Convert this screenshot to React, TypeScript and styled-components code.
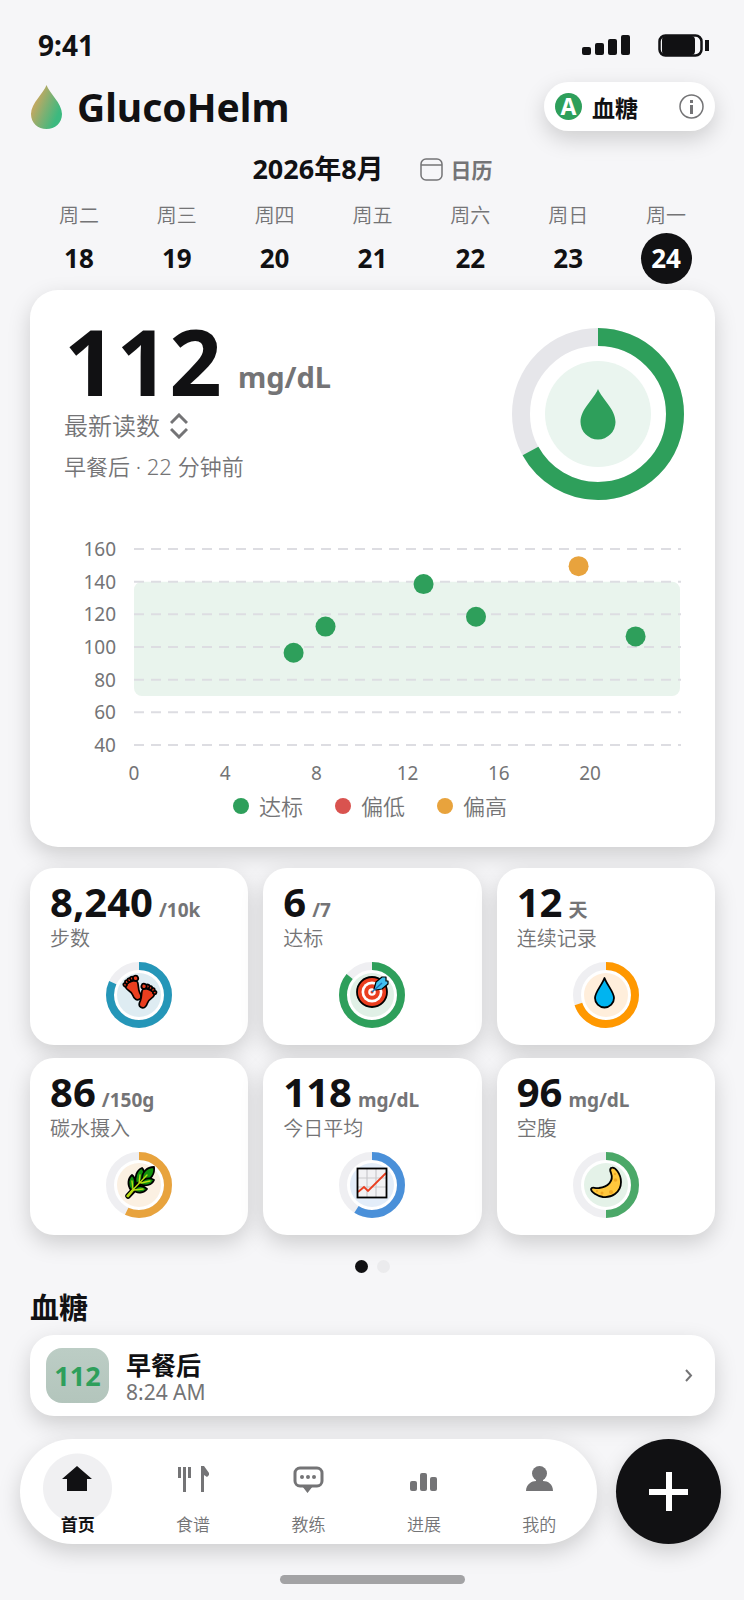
import React from "react";
import styled, { createGlobalStyle, ThemeProvider } from "styled-components";

const theme = {
  colors: {
    page: "#f6f6f8",
    card: "#ffffff",
    ink: "#111113",
    muted: "#747476",
    green: "#2e9f5b",
    red: "#d9534f",
    amber: "#e8a33d",
    grid: "#dddde2",
    band: "#e9f4ed",
  },
  shadow: "0 8px 22px rgba(0, 0, 0, 0.17)",
};

const GlobalStyle = createGlobalStyle`
  * {
    box-sizing: border-box;
  }

  body {
    margin: 0;
    background: ${theme.colors.page};
    color: ${theme.colors.ink};
    font-family: "Noto Sans", "Noto Sans CJK SC", sans-serif;
  }

  button {
    border: 0;
    padding: 0;
    background: none;
    color: inherit;
    font: inherit;
    text-align: left;
    cursor: pointer;
  }

  h1, h2, p, ul {
    margin: 0;
    padding: 0;
  }

  svg {
    display: block;
    flex: none;
  }
`;

const Page = styled.div`
  padding-top: 28px;
`;

const Content = styled.main`
  padding: 0 29px 0 30px;
`;

const StatusBar = styled.div`
  display: flex;
  align-items: center;
  justify-content: space-between;
  padding: 0 5px 0 8px;
  line-height: 34px;
  font-size: 28px;
  font-weight: 700;
`;

const StatusIcons = styled.div`
  display: flex;
  align-items: center;
  gap: 28px;
`;

const Header = styled.header`
  display: flex;
  align-items: center;
  justify-content: space-between;
  margin-top: 20px;
`;

const Brand = styled.div`
  display: flex;
  align-items: center;
  gap: 14px;
`;

const BrandName = styled.h1`
  font-size: 39px;
  line-height: 49px;
  font-weight: 700;
`;

const ModePill = styled.button`
  display: flex;
  align-items: center;
  width: 171px;
  height: 49px;
  padding: 0 11px;
  border-radius: 25px;
  background: ${({ theme }) => theme.colors.card};
  box-shadow: ${({ theme }) => theme.shadow};
  font-size: 23px;
  font-weight: 700;

  svg {
    margin-left: auto;
  }
`;

const ModeLetter = styled.span`
  width: 27px;
  margin-right: 10px;
  border-radius: 50%;
  background: ${({ theme }) => theme.colors.green};
  color: #fff;
  font-size: 23px;
  line-height: 27px;
  text-align: center;
`;

const MonthRow = styled.div`
  display: flex;
  align-items: center;
  justify-content: center;
  gap: 36px;
  margin-top: 20px;
`;

const Month = styled.h2`
  font-size: 27px;
  line-height: 36px;
  font-weight: 700;
`;

const CalendarButton = styled.button`
  display: flex;
  align-items: center;
  gap: 8px;
  color: ${({ theme }) => theme.colors.muted};
  font-size: 21px;
  font-weight: 700;
`;

const Week = styled.div`
  display: grid;
  grid-template-columns: repeat(7, 1fr);
  margin-top: 14px;
`;

const Day = styled.button`
  display: flex;
  flex-direction: column;
  align-items: center;
  gap: 2px;
`;

const DayName = styled.span`
  color: ${({ theme }) => theme.colors.muted};
  font-size: 20px;
  line-height: 30px;
  font-weight: 350;
`;

const DayNumber = styled.span<{ $selected?: boolean }>`
  width: 51px;
  border-radius: 50%;
  background: ${({ theme, $selected }) =>
    $selected ? theme.colors.ink : "transparent"};
  color: ${({ $selected }) => ($selected ? "#fff" : "inherit")};
  font-size: 26px;
  line-height: 51px;
  font-weight: 700;
  text-align: center;
`;

const Card = styled.section`
  border-radius: 28px;
  background: ${({ theme }) => theme.colors.card};
  box-shadow: ${({ theme }) => theme.shadow};
`;

const ReadingCard = styled(Card)`
  margin-top: 6px;
  padding: 25px 31px 25px 34px;
`;

const ReadingTop = styled.div`
  display: flex;
  justify-content: space-between;
  align-items: flex-end;
`;

const Reading = styled.p`
  display: flex;
  align-items: flex-end;
  gap: 16px;
  font-size: 92px;
  line-height: 92px;
  font-weight: 700;
`;

const ReadingUnit = styled.span`
  margin-bottom: 10px;
  color: ${({ theme }) => theme.colors.muted};
  font-size: 29px;
  line-height: 40px;
`;

const ReadingPicker = styled.button`
  display: flex;
  align-items: center;
  gap: 10px;
  margin-top: 1px;
  color: ${({ theme }) => theme.colors.muted};
  font-size: 24px;
  line-height: 36px;
  font-weight: 350;
`;

const ReadingMeta = styled.p`
  margin: 6px 0 18px;
  color: ${({ theme }) => theme.colors.muted};
  font-size: 22px;
  line-height: 32px;
  font-weight: 350;
`;

const Chart = styled.svg`
  width: 100%;
  margin-top: 35px;

  text {
    fill: ${({ theme }) => theme.colors.muted};
    font-size: 19px;
  }
`;

const Legend = styled.ul`
  display: flex;
  justify-content: center;
  gap: 32px;
  padding-right: 8px;
  list-style: none;
`;

const LegendItem = styled.li<{ $color: string }>`
  display: flex;
  align-items: center;
  gap: 10px;
  color: ${({ theme }) => theme.colors.muted};
  font-size: 22px;
  line-height: 32px;
  font-weight: 350;

  &::before {
    content: "";
    width: 16px;
    height: 16px;
    border-radius: 50%;
    background: ${({ $color }) => $color};
  }
`;

const Metrics = styled.div`
  display: grid;
  grid-template-columns: repeat(3, 1fr);
  gap: 13px 15px;
  margin-top: 21px;
`;

const MetricCard = styled(Card)`
  padding: 13px 20px 17px;
  border-radius: 24px;

  svg {
    margin: 7px auto 0;
  }
`;

const MetricValue = styled.p`
  display: flex;
  align-items: baseline;
  gap: 6px;
  font-size: 40px;
  line-height: 42px;
  font-weight: 700;
`;

const MetricUnit = styled.span`
  color: ${({ theme }) => theme.colors.muted};
  font-size: 19px;
  line-height: 24px;
`;

const MetricLabel = styled.p`
  color: ${({ theme }) => theme.colors.muted};
  font-size: 20px;
  line-height: 32px;
  font-weight: 350;
`;

const Pager = styled.div`
  display: flex;
  justify-content: center;
  gap: 9px;
  margin-top: 25px;
`;

const PagerDot = styled.button<{ $active?: boolean }>`
  width: 13px;
  height: 13px;
  border-radius: 50%;
  background: ${({ theme, $active }) =>
    $active ? theme.colors.ink : "#ebebed"};
`;

const SectionTitle = styled.h2`
  margin: 16px 0 8px;
  font-size: 29px;
  line-height: 38px;
  font-weight: 700;
`;

const EntryRow = styled.button`
  display: flex;
  align-items: center;
  width: 100%;
  padding: 13px 22px 13px 16px;
  border-radius: 24px;
  background: ${({ theme }) => theme.colors.card};
  box-shadow: ${({ theme }) => theme.shadow};

  svg {
    margin-left: auto;
  }
`;

const EntryBadge = styled.span`
  width: 63px;
  margin-right: 17px;
  border-radius: 16px;
  background: linear-gradient(#bccdc5, #b3c5bc);
  color: ${({ theme }) => theme.colors.green};
  font-size: 27px;
  line-height: 55px;
  font-weight: 700;
  text-align: center;
`;

const EntryText = styled.span`
  display: flex;
  flex-direction: column;
`;

const EntryTitle = styled.span`
  font-size: 25px;
  line-height: 32px;
  font-weight: 700;
`;

const EntryTime = styled.span`
  color: ${({ theme }) => theme.colors.muted};
  font-size: 21px;
  line-height: 22px;
`;

const BottomBar = styled.div`
  display: flex;
  gap: 19px;
  margin-top: 23px;
  padding: 0 23px 0 20px;
`;

const Nav = styled.nav`
  display: grid;
  grid-template-columns: repeat(5, 1fr);
  flex: 1;
  height: 105px;
  border-radius: 53px;
  background: ${({ theme }) => theme.colors.card};
  box-shadow: ${({ theme }) => theme.shadow};
`;

const NavItem = styled.button<{ $active?: boolean }>`
  display: flex;
  flex-direction: column;
  align-items: center;
  padding-top: 25px;
  color: ${({ theme, $active }) =>
    $active ? theme.colors.ink : theme.colors.muted};
  font-size: 17px;
  line-height: 24px;
  font-weight: ${({ $active }) => ($active ? 700 : 350)};
  background: ${({ $active }) =>
    $active
      ? "radial-gradient(circle at 50% 49px, #f0f0f2 34px, transparent 35px)"
      : "none"};

  svg {
    margin-bottom: 18px;
  }
`;

const AddButton = styled.button`
  display: grid;
  place-items: center;
  width: 105px;
  height: 105px;
  border-radius: 50%;
  background: ${({ theme }) => theme.colors.ink};
  box-shadow: ${({ theme }) => theme.shadow};
  color: #fff;
`;

const HomeIndicator = styled.div`
  width: 185px;
  height: 9px;
  margin: 31px auto 15px;
  border-radius: 5px;
  background: #a3a3a5;
`;

const days = [
  { name: "周二", date: 18 },
  { name: "周三", date: 19 },
  { name: "周四", date: 20 },
  { name: "周五", date: 21 },
  { name: "周六", date: 22 },
  { name: "周日", date: 23 },
  { name: "周一", date: 24 },
];

const readings = [
  { hour: 7, value: 96.5, high: false },
  { hour: 8.4, value: 112.5, high: false },
  { hour: 12.7, value: 138.5, high: false },
  { hour: 15, value: 118.5, high: false },
  { hour: 19.5, value: 149.5, high: true },
  { hour: 22, value: 106.5, high: false },
];

interface IRingProps {
  size: number;
  stroke: number;
  percent: number;
  color: string;
  track: string;
  disc: string;
  discRadius: number;
  children: React.ReactNode;
}

// children are drawn around the ring's centre
const Ring = ({
  size,
  stroke,
  percent,
  color,
  track,
  disc,
  discRadius,
  children,
}: IRingProps) => {
  const center = size / 2;
  const radius = (size - stroke) / 2;

  return (
    <svg width={size} height={size} viewBox={`0 0 ${size} ${size}`} aria-hidden>
      <circle
        cx={center}
        cy={center}
        r={radius}
        fill="none"
        stroke={track}
        strokeWidth={stroke}
      />
      <circle
        cx={center}
        cy={center}
        r={radius}
        fill="none"
        stroke={color}
        strokeWidth={stroke}
        pathLength={100}
        strokeDasharray={`${percent} 100`}
        transform={`rotate(-90 ${center} ${center})`}
      />
      <circle cx={center} cy={center} r={discRadius} fill={disc} />
      <g transform={`translate(${center} ${center})`}>{children}</g>
    </svg>
  );
};

const Foot = () => (
  <g stroke="#000" strokeWidth="1.7" strokeLinejoin="round" fill="#ea3e1f">
    <path d="M-7-6C-7-1-3-1-3 4C-3 9-1 11 2 10.500C5 10 5 7 4.500 4C4 1 6-3 6-6C6-10-7-10-7-6Z" />
    <circle cx="-6.500" cy="-8" r="1.800" />
    <circle cx="-4" cy="-10" r="1.800" />
    <circle cx="-1" cy="-11" r="1.800" />
    <circle cx="2" cy="-11.500" r="1.900" />
    <circle cx="5.500" cy="-10.500" r="2.600" />
  </g>
);

const FootprintsIcon = () => (
  <g>
    <g transform="translate(-5 -5) rotate(-20)">
      <Foot />
    </g>
    <g transform="translate(7 3) rotate(18) scale(-1 1)">
      <Foot />
    </g>
  </g>
);

const TargetIcon = () => (
  <g transform="translate(0 -3)">
    <circle r="15" fill="#ea3e1f" stroke="#000" strokeWidth="1.800" />
    <circle r="10.500" fill="#fff" />
    <circle r="7.800" fill="#ea3e1f" />
    <circle r="3.800" fill="#fff" />
    <circle r="1.500" fill="#ea3e1f" />
    <path
      d="M2-3L4-10L10-15H14V-11H16V-8L10-3L4-2Z"
      fill="#3fc0f0"
      stroke="#000"
      strokeWidth="1.200"
      strokeLinejoin="round"
    />
    <path d="M0 0L10-9" stroke="#1b6fb5" strokeWidth="1.500" />
  </g>
);

const WaterIcon = () => (
  <path
    d="M-1.500-17C1-10 8-3 8 3A9.200 9.200 0 0 1-11 3C-11-3-4-10-1.500-17Z"
    fill="#00b4f0"
    stroke="#000"
    strokeWidth="1.800"
    strokeLinejoin="round"
  />
);

const LeafIcon = () => (
  <g strokeLinecap="round" strokeLinejoin="round">
    <path d="M-11 11L4-5" stroke="#000" strokeWidth="5.500" />
    <g fill="#13920e" stroke="#000" strokeWidth="1.800">
      <path d="M-8 5C-12 0-11-7-7-10C-3-7-3 0-6 4Z" />
      <path d="M-3-1C-5-8-2-15 3-17C7-13 5-6 0-3Z" />
      <path d="M3-6C3-13 8-18 15-18C16-11 12-5 5-4Z" />
      <path d="M1-1C4-7 11-8 15-5C13 0 6 2 1-1Z" />
      <path d="M-5 5C-2 0 4 0 8 4C5 8-2 9-5 5Z" />
    </g>
    <path
      d="M-12 11L8-10M-7-4L-6 4M1-10L0-2M11-4L2-2M4 4L-5 5"
      stroke="#b9dc12"
      strokeWidth="1.400"
      fill="none"
    />
    <path d="M-11 11L-6 5" stroke="#b9dc12" strokeWidth="2.600" />
  </g>
);

const TrendIcon = () => (
  <g transform="translate(0 -2)">
    <rect x="-14.500" y="-14.500" width="29" height="29" fill="#f2f2f4" />
    <path
      d="M-5-14V14M4-14V14M-14-5H14M-14 4H14"
      stroke="#c9c9cc"
      strokeWidth="1.200"
    />
    <path
      d="M-14 9L-8 4L-4 8L14-10"
      fill="none"
      stroke="#ea3e1f"
      strokeWidth="1.800"
    />
    <rect
      x="-14.500"
      y="-14.500"
      width="29"
      height="29"
      fill="none"
      stroke="#000"
      strokeWidth="1.800"
    />
  </g>
);

const MoonIcon = () => (
  <g>
    <path
      d="M5-17C9-19 15-11 15-3C15 8 5 13-3 12C-9 11-15 7-15 4C-14 1-11 4-7 3C2 2 8-4 5-12C4-14 4-16 5-17Z"
      fill="#ffc83d"
      stroke="#000"
      strokeWidth="1.800"
      strokeLinejoin="round"
    />
    <g fill="#f0a824">
      <circle cx="9.500" cy="-5" r="1.800" />
      <circle cx="9" cy="-11" r="1.200" />
      <circle cx="5" cy="7" r="2" />
      <circle cx="-4" cy="8" r="1.500" />
      <circle cx="-9" cy="6" r="1" />
    </g>
  </g>
);

const metrics = [
  {
    value: "8,240",
    unit: "/10k",
    label: "步数",
    percent: 82,
    color: "#2596b8",
    disc: "#deecf2",
    icon: <FootprintsIcon />,
  },
  {
    value: "6",
    unit: "/7",
    label: "达标",
    percent: 86,
    color: "#2e9f5b",
    disc: "#e0f0e6",
    icon: <TargetIcon />,
  },
  {
    value: "12",
    unit: "天",
    label: "连续记录",
    percent: 70,
    color: "#ff9800",
    disc: "#ffeedb",
    icon: <WaterIcon />,
  },
  {
    value: "86",
    unit: "/150g",
    label: "碳水摄入",
    percent: 57,
    color: "#e8a33d",
    disc: "#fbf0e2",
    icon: <LeafIcon />,
  },
  {
    value: "118",
    unit: "mg/dL",
    label: "今日平均",
    percent: 59,
    color: "#4a90d9",
    disc: "#e3edf9",
    icon: <TrendIcon />,
  },
  {
    value: "96",
    unit: "mg/dL",
    label: "空腹",
    percent: 50,
    color: "#4ba868",
    disc: "#e4f2e8",
    icon: <MoonIcon />,
  },
];

const navItems = [
  {
    label: "首页",
    icon: <path d="M15 2L30 15H25V27H5V15H0Z" fill="currentColor" />,
  },
  {
    label: "食谱",
    icon: (
      <path
        d="M0 3H3V14H0ZM5 3H8V28H5ZM10 3H13V14H10ZM23 2H26L31 9V11L29 13L26 11V28H23Z"
        fill="currentColor"
      />
    ),
  },
  {
    label: "教练",
    icon: (
      <>
        <rect
          x="2"
          y="4"
          width="27"
          height="18"
          rx="5"
          fill="none"
          stroke="currentColor"
          strokeWidth="3"
        />
        <path
          d="M9 22H20L14.500 29ZM7 13a2 2 0 1 0 4 0a2 2 0 1 0-4 0M13 13a2 2 0 1 0 4 0a2 2 0 1 0-4 0M19 13a2 2 0 1 0 4 0a2 2 0 1 0-4 0"
          fill="currentColor"
        />
      </>
    ),
  },
  {
    label: "进展",
    icon: (
      <g fill="currentColor">
        <rect x="2" y="17" width="7" height="10" rx="2" />
        <rect x="12" y="9" width="7" height="18" rx="2" />
        <rect x="22" y="13" width="7" height="14" rx="2" />
      </g>
    ),
  },
  {
    label: "我的",
    icon: (
      <g fill="currentColor">
        <circle cx="15.500" cy="9.500" r="7.500" />
        <path d="M2 27C2 20 8 17 12 17V14H19V17C24 17 29 20 29 27Z" />
      </g>
    ),
  },
];

const GlucoseChart = () => {
  const toX = (hour: number) => 70 + hour * 22.8;
  const toY = (value: number) => 14 + ((160 - value) * 196) / 120;

  return (
    <Chart viewBox="0 0 620 255" role="img" aria-label="血糖">
      <rect
        x="70"
        y={toY(140)}
        width="546"
        height={toY(70) - toY(140)}
        rx="8"
        fill={theme.colors.band}
      />
      {[160, 140, 120, 100, 80, 60, 40].map((value) => (
        <g key={value}>
          <line
            x1="70"
            x2="617"
            y1={toY(value)}
            y2={toY(value)}
            stroke={theme.colors.grid}
            strokeWidth="2"
            strokeDasharray="10 7"
          />
          <text x="52" y={toY(value) + 7} textAnchor="end">
            {value}
          </text>
        </g>
      ))}
      {[0, 4, 8, 12, 16, 20].map((hour) => (
        <text key={hour} x={toX(hour)} y="245" textAnchor="middle">
          {hour}
        </text>
      ))}
      {readings.map((item) => (
        <circle
          key={item.hour}
          cx={toX(item.hour)}
          cy={toY(item.value)}
          r="10"
          fill={item.high ? theme.colors.amber : theme.colors.green}
        />
      ))}
    </Chart>
  );
};

const App = () => {
  const [activeNav, setActiveNav] = React.useState("首页");
  const [selectedDate, setSelectedDate] = React.useState(24);

  return (
    <ThemeProvider theme={theme}>
      <GlobalStyle />
      <Page>
        <Content>
          <StatusBar>
            <span>9:41</span>
            <StatusIcons>
              <svg width="48" height="20" fill="currentColor" aria-hidden>
                <rect x="0" y="12" width="9" height="8" rx="2" />
                <rect x="13" y="8" width="9" height="12" rx="2" />
                <rect x="26" y="4" width="9" height="16" rx="2" />
                <rect x="39" y="0" width="9" height="20" rx="2" />
              </svg>
              <svg width="52" height="23" fill="currentColor" aria-hidden>
                <rect
                  x="1.500"
                  y="1.500"
                  width="42"
                  height="20"
                  rx="6"
                  fill="none"
                  stroke="currentColor"
                  strokeWidth="2.500"
                />
                <rect x="4" y="2" width="33" height="19" rx="4" />
                <rect x="47" y="6" width="4" height="11" />
              </svg>
            </StatusIcons>
          </StatusBar>

          <Header>
            <Brand>
              <svg width="33" height="44" viewBox="0 0 33 44" aria-hidden>
                <defs>
                  <linearGradient id="drop" x1="0" y1=".2" x2="1" y2=".8">
                    <stop offset=".15" stopColor="#c9a85f" />
                    <stop offset=".5" stopColor="#7fb072" />
                    <stop offset=".85" stopColor="#3cb97f" />
                  </linearGradient>
                </defs>
                <path
                  d="M16.500 0C19 8 32 18 32 29C32 38 25 44 16.500 44C8 44 1 38 1 29C1 18 14 8 16.500 0Z"
                  fill="url(#drop)"
                />
              </svg>
              <BrandName>GlucoHelm</BrandName>
            </Brand>
            <ModePill type="button">
              <ModeLetter>A</ModeLetter>
              血糖
              <svg width="25" height="25" aria-hidden>
                <circle
                  cx="12.500"
                  cy="12.500"
                  r="11.500"
                  fill="none"
                  stroke={theme.colors.muted}
                  strokeWidth="1.500"
                />
                <path
                  d="M11 6H14V9H11ZM11 11H14V20H11Z"
                  fill={theme.colors.muted}
                />
              </svg>
            </ModePill>
          </Header>

          <MonthRow>
            <Month>2026年8月</Month>
            <CalendarButton type="button">
              <svg
                width="23"
                height="23"
                fill="none"
                stroke="currentColor"
                strokeWidth="1.500"
                aria-hidden
              >
                <rect x="1" y="1" width="21" height="21" rx="5" />
                <path d="M1 7H22" />
              </svg>
              日历
            </CalendarButton>
          </MonthRow>

          <Week>
            {days.map((day) => (
              <Day
                key={day.date}
                type="button"
                onClick={() => setSelectedDate(day.date)}
              >
                <DayName>{day.name}</DayName>
                <DayNumber $selected={day.date === selectedDate}>
                  {day.date}
                </DayNumber>
              </Day>
            ))}
          </Week>

          <ReadingCard>
            <ReadingTop>
              <div>
                <Reading>
                  112
                  <ReadingUnit>mg/dL</ReadingUnit>
                </Reading>
                <ReadingPicker type="button">
                  最新读数
                  <svg
                    width="18"
                    height="26"
                    fill="none"
                    stroke="currentColor"
                    strokeWidth="3"
                    aria-hidden
                  >
                    <path d="M1 10L9 2L17 10M1 16L9 24L17 16" />
                  </svg>
                </ReadingPicker>
                <ReadingMeta>早餐后 · 22 分钟前</ReadingMeta>
              </div>
              <Ring
                size={172}
                stroke={18}
                percent={67}
                color={theme.colors.green}
                track="#e6e6ea"
                disc="#eaf5ef"
                discRadius={53}
              >
                <path
                  d="M0-25C4-15 17.500-5 17.500 8A17.500 17.500 0 0 1-17.500 8C-17.500-5-4-15 0-25Z"
                  fill={theme.colors.green}
                />
              </Ring>
            </ReadingTop>
            <GlucoseChart />
            <Legend>
              <LegendItem $color={theme.colors.green}>达标</LegendItem>
              <LegendItem $color={theme.colors.red}>偏低</LegendItem>
              <LegendItem $color={theme.colors.amber}>偏高</LegendItem>
            </Legend>
          </ReadingCard>

          <Metrics>
            {metrics.map((item) => (
              <MetricCard key={item.label}>
                <MetricValue>
                  {item.value}
                  <MetricUnit>{item.unit}</MetricUnit>
                </MetricValue>
                <MetricLabel>{item.label}</MetricLabel>
                <Ring
                  size={66}
                  stroke={8}
                  percent={item.percent}
                  color={item.color}
                  track="#efeff2"
                  disc={item.disc}
                  discRadius={22}
                >
                  {item.icon}
                </Ring>
              </MetricCard>
            ))}
          </Metrics>

          <Pager>
            <PagerDot type="button" aria-label="1" $active />
            <PagerDot type="button" aria-label="2" />
          </Pager>

          <SectionTitle>血糖</SectionTitle>
          <EntryRow type="button">
            <EntryBadge>112</EntryBadge>
            <EntryText>
              <EntryTitle>早餐后</EntryTitle>
              <EntryTime>8:24 AM</EntryTime>
            </EntryText>
            <svg
              width="9"
              height="13"
              fill="none"
              stroke={theme.colors.muted}
              strokeWidth="2"
              aria-hidden
            >
              <path d="M2 1L7 6.500L2 12" />
            </svg>
          </EntryRow>
        </Content>

        <BottomBar>
          <Nav>
            {navItems.map((item) => (
              <NavItem
                key={item.label}
                type="button"
                $active={item.label === activeNav}
                onClick={() => setActiveNav(item.label)}
              >
                <svg width="31" height="31" aria-hidden>
                  {item.icon}
                </svg>
                {item.label}
              </NavItem>
            ))}
          </Nav>
          <AddButton type="button" aria-label="+">
            <svg width="39" height="39" fill="currentColor" aria-hidden>
              <path d="M17 0H23V17H39V23H23V39H17V23H0V17H17Z" />
            </svg>
          </AddButton>
        </BottomBar>
        <HomeIndicator />
      </Page>
    </ThemeProvider>
  );
};

export default App;
